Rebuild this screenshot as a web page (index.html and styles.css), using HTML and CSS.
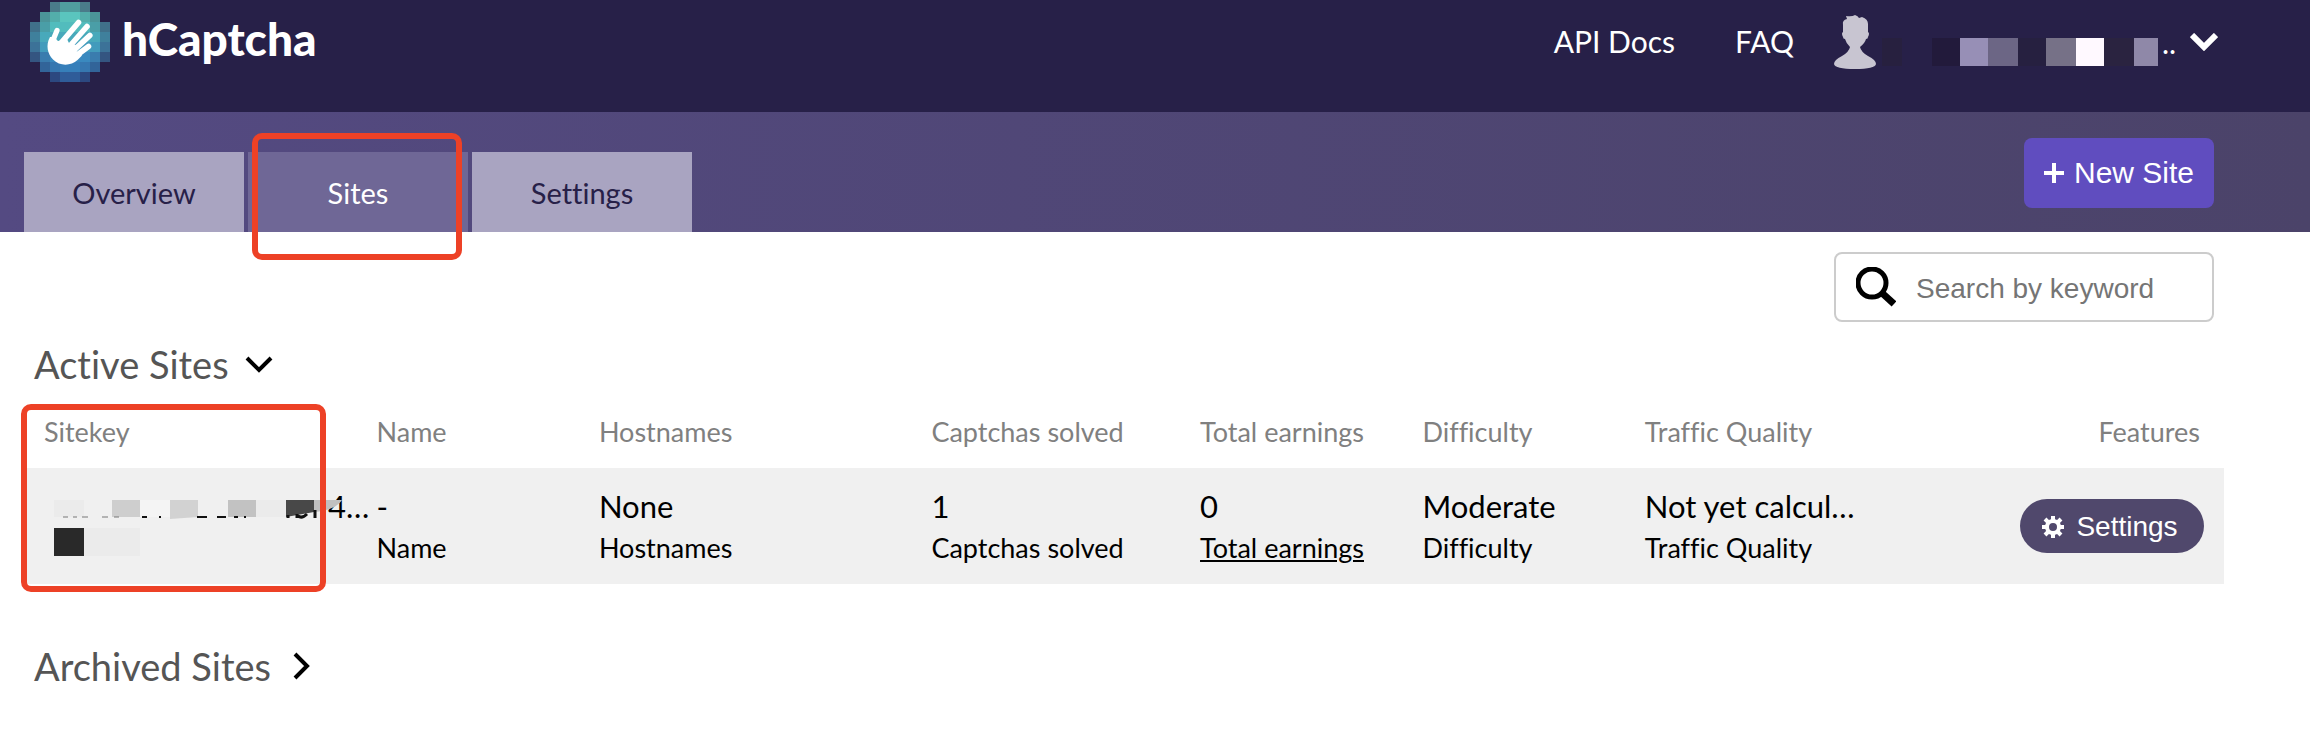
FILE: index.html
```
<!DOCTYPE html>
<html lang="en">
<head>
    <meta charset="UTF-8">
    <meta name="viewport" content="width=device-width, initial-scale=1.0">
    <title>hCaptcha - Sites</title>
    <link rel="stylesheet" href="styles.css">
</head>
<body>

    <header class="topbar">
        <a class="brand" href="#home">
            <svg class="brand-mark" viewBox="0 0 8 8" shape-rendering="crispEdges" aria-hidden="true">
                <path fill="#4a7b8a" d="M2 0h4v1H2z"/>
                <path fill="#509e9e" d="M3 0h2v1H3z"/>
                <path fill="#4b9499" d="M1 1h6v1H1z"/>
                <path fill="#53aeab" d="M2 1h4v1H2z"/>
                <path fill="#5ac5be" d="M3 1h2v1H3z"/>
                <path fill="#40708a" d="M0 2h8v1H0z"/>
                <path fill="#4a9ea7" d="M1 2h6v1H1z"/>
                <path fill="#52bcbd" d="M2 2h4v1H2z"/>
                <path fill="#3f809c" d="M0 3h8v1H0z"/>
                <path fill="#48a9bb" d="M1 3h6v1H1z"/>
                <path fill="#3c7298" d="M0 4h8v1H0z"/>
                <path fill="#429bbc" d="M1 4h6v1H1z"/>
                <path fill="#345581" d="M0 5h8v1H0z"/>
                <path fill="#3a7cae" d="M1 5h6v1H1z"/>
                <path fill="#3a89bf" d="M2 5h4v1H2z"/>
                <path fill="#326499" d="M1 6h6v1H1z"/>
                <path fill="#3677b0" d="M2 6h4v1H2z"/>
                <path fill="#367fba" d="M3 6h2v1H3z"/>
                <path fill="#2c4880" d="M2 7h4v1H2z"/>
                <path fill="#2f5c99" d="M3 7h2v1H3z"/>
                <g shape-rendering="geometricPrecision" stroke="#fff" stroke-linecap="round" fill="none">
                    <path stroke-width=".52" d="M2.7 2.85 2.1 4.3"/>
                    <path stroke-width=".56" d="M4.85 2.05 3.1 4.1M5.7 2.45 3.9 4.5M5.98 3.35 4.2 5M5.85 4.45 4.3 5.6"/>
                    <path fill="#fff" stroke="none" d="M2 3.5C1.55 4.3 1.75 5.2 2.3 5.75 3 6.45 4.1 6.4 4.75 5.8L5.2 5.35 4.5 4.8 4.6 4.3 3.9 4.1 3.6 3.5 3.2 3.7Q2.75 4.2 2.55 3.5Z"/>
                </g>
            </svg>
            <span>hCaptcha</span>
        </a>
        <div class="topbar-links">
            <a href="#docs">API Docs</a>
            <a href="#faq">FAQ</a>
            <button class="account" type="button" aria-label="Account menu">
                <svg class="avatar" viewBox="0 0 42 54" aria-hidden="true">
                    <path fill="#c8c5d1" d="M9 10Q8 5 13 4L12 1Q18 2 21 0 24 1 25 3L28 2Q34 4 34 9V17Q36 18 34 22 34 24 32 24 31 28 26 32 27 37 34 41 42 45 42 49 41 54 21 54 1 54 0 49 0 45 8 41 15 37 16 32 12 28 11 24 9 24 9 22 7 18 9 17Z"/>
                </svg>
                <svg class="account-name" viewBox="0 0 276 28" shape-rendering="crispEdges" aria-hidden="true">
                    <path fill="#27203f" d="M0 0h20v28H0z"/>
                    <path fill="#221a3b" d="M50 0h28v28H50z"/>
                    <path fill="#978fb6" d="M78 0h28v28H78z"/>
                    <path fill="#6c6685" d="M106 0h30v28h-30z"/>
                    <path fill="#262040" d="M136 0h28v28h-28z"/>
                    <path fill="#767187" d="M164 0h30v28h-30z"/>
                    <path fill="#fff9ff" d="M194 0h28v28h-28z"/>
                    <path fill="#2a2340" d="M222 0h30v28h-30z"/>
                    <path fill="#8f88a8" d="M252 0h24v28h-24z"/>
                </svg>
                <span class="account-dots">..</span>
                <svg class="account-arrow" viewBox="0 0 28 18" aria-hidden="true">
                    <path fill="none" stroke="#fff" stroke-width="6" d="M2 2l12 12L26 2"/>
                </svg>
            </button>
        </div>
    </header>

    <nav class="subnav">
        <ul class="tabs">
            <li><a class="tab" href="#overview">Overview</a></li>
            <li class="marked-tab"><a class="tab active" href="#sites">Sites</a></li>
            <li><a class="tab" href="#settings">Settings</a></li>
        </ul>
        <button class="new-site" type="button">
            <svg viewBox="0 0 20 20" aria-hidden="true"><path fill="#fff" d="M8 0h4v8h8v4h-8v8H8v-8H0V8h8z"/></svg>
            New Site
        </button>
    </nav>

    <main>
        <div class="toolbar">
            <label class="search">
                <svg viewBox="0 0 40 40" aria-hidden="true">
                    <circle cx="16" cy="16" r="14" fill="none" stroke="#000" stroke-width="5"/>
                    <path stroke="#000" stroke-width="7" d="M26 26l12 11"/>
                </svg>
                <input type="search" placeholder="Search by keyword" aria-label="Search by keyword">
            </label>
        </div>

        <h2>
            <button class="toggle" type="button" aria-expanded="true">
                Active Sites
                <svg viewBox="0 0 28 28" aria-hidden="true"><path fill="none" stroke="#000" stroke-width="4" d="M2 8l12 12L26 8"/></svg>
            </button>
        </h2>

        <div class="sites">
            <table>
                <colgroup>
                    <col class="col-key">
                    <col class="col-name">
                    <col class="col-hosts">
                    <col class="col-solved">
                    <col class="col-small">
                    <col class="col-small">
                    <col>
                </colgroup>
                <thead>
                    <tr>
                        <th>Sitekey</th>
                        <th>Name</th>
                        <th>Hostnames</th>
                        <th>Captchas solved</th>
                        <th>Total earnings</th>
                        <th>Difficulty</th>
                        <th>
                            <div class="last-cell">Traffic Quality <span>Features</span></div>
                        </th>
                    </tr>
                </thead>
                <tbody>
                    <tr>
                        <td class="key">
                            <div class="value">4…</div>
                            <svg class="key-mask" viewBox="0 0 292 60" aria-hidden="true">
                                <path fill="#ebebeb" d="M0 2h30v17H0zM30 30h56v28H30z"/>
                                <path fill="#cecece" d="M58 2h28v17H58z"/>
                                <path fill="#f4f4f4" d="M86 2h30v17H86z"/>
                                <path fill="#d2d2d2" d="M116 2h28v17l-28 2z"/>
                                <path fill="#c2c2c2" d="M174 2h28v17h-28z"/>
                                <path fill="#ebebeb" d="M202 2h30v17h-30z"/>
                                <path fill="#484848" d="M232 2h28v12l-28 5z"/>
                                <path fill="#c0c0c0" d="M260 2h28q-6 10-28 12z"/>
                                <path fill="#292929" d="M0 30h30v28H0z"/>
                                <path fill="none" stroke="#777" stroke-width="1" d="M9 19h5m5 0h4m5 0h6m14 0h6m6 0h5"/>
                                <path fill="none" stroke="#111" stroke-width="2" d="M88 19h5m12 0h2m36 0h10m10 0h9m8 0h4m6 0h2"/>
                                <path fill="none" stroke="#111" stroke-width="3" d="M234 17v3m9-4v4m1-2q4 3 9-2m8-4v8"/>
                            </svg>
                        </td>
                        <td>
                            <div class="value">-</div>
                            <div class="label">Name</div>
                        </td>
                        <td>
                            <div class="value">None</div>
                            <div class="label">Hostnames</div>
                        </td>
                        <td>
                            <div class="value">1</div>
                            <div class="label">Captchas solved</div>
                        </td>
                        <td>
                            <div class="value">0</div>
                            <a class="label" href="#earnings">Total earnings</a>
                        </td>
                        <td>
                            <div class="value">Moderate</div>
                            <div class="label">Difficulty</div>
                        </td>
                        <td>
                            <div class="last-cell">
                                <div>
                                    <div class="value">Not yet calcul…</div>
                                    <div class="label">Traffic Quality</div>
                                </div>
                                <button class="site-settings" type="button">
                                    <svg viewBox="0 0 22 22" aria-hidden="true">
                                        <circle cx="11" cy="11" r="6" fill="none" stroke="#fff" stroke-width="4"/>
                                        <path stroke="#fff" stroke-width="4" d="M11 0v4M11 18v4M0 11h4M18 11h4M3 3l3 3M16 16l3 3M3 19l3-3M16 6l3-3"/>
                                    </svg>
                                    Settings
                                </button>
                            </div>
                        </td>
                    </tr>
                </tbody>
            </table>
        </div>

        <h2>
            <button class="toggle" type="button" aria-expanded="false">
                Archived Sites
                <svg viewBox="0 0 28 28" aria-hidden="true"><path fill="none" stroke="#000" stroke-width="4" d="M8 2l12 12L8 26"/></svg>
            </button>
        </h2>
    </main>

</body>
</html>
```
FILE: styles.css
```
* {
    box-sizing: border-box;
}

body {
    margin: 0;
    font-family: Lato, sans-serif;
    font-variant-ligatures: none;
    background-color: #fff;
    color: #000;
}

button {
    border: 0;
    background: none;
    cursor: pointer;
}

svg {
    display: block;
    flex: none;
}

/* Top bar */
.topbar {
    display: flex;
    justify-content: space-between;
    align-items: flex-start;
    height: 112px;
    padding: 2px 92px 0 30px;
    background-color: #272048;
}

.brand {
    display: flex;
    align-items: center;
    gap: 12px;
    height: 80px;
    color: #fff;
    font-size: 46px;
    font-weight: 900;
    text-decoration: none;
}

.brand span {
    padding-bottom: 8px;
}

.brand-mark {
    width: 80px;
    height: 80px;
}

.topbar-links {
    display: flex;
    align-items: center;
    height: 80px;
    font-size: 30px;
}

.topbar-links a {
    margin-right: 60px;
    padding-bottom: 2px;
    color: #fff;
    text-decoration: none;
}

.topbar-links .account {
    margin-left: -20px;
}

.account {
    display: flex;
    align-items: center;
    padding: 0;
    color: #fff;
    font: inherit;
}

.avatar {
    width: 42px;
    height: 54px;
}

.account-name {
    width: 276px;
    height: 28px;
    margin: 20px 4px 0 6px;
}

.account-dots {
    width: 28px;
    text-align: left;
}

.account-arrow {
    width: 28px;
    height: 18px;
}

/* Tabs */
.subnav {
    display: flex;
    justify-content: space-between;
    align-items: flex-end;
    height: 120px;
    padding: 0 96px 0 24px;
    background: linear-gradient(to right, #544a82, #4b4369);
}

.tabs {
    display: flex;
    gap: 4px;
    margin: 0;
    padding: 0;
    list-style: none;
}

.tab {
    display: flex;
    justify-content: center;
    align-items: center;
    width: 220px;
    height: 80px;
    background-color: #a9a4c1;
    color: #272048;
    font-size: 29px;
    text-decoration: none;
}

.tab.active {
    background-color: #6f6796;
    color: #fff;
}

.marked-tab {
    position: relative;
}

.marked-tab::after {
    content: "";
    position: absolute;
    top: -19px;
    right: 6px;
    bottom: -28px;
    left: 4px;
    border: 6px solid #ed4126;
    border-radius: 10px;
}

.new-site {
    display: flex;
    justify-content: center;
    align-items: center;
    gap: 10px;
    width: 190px;
    height: 70px;
    margin-bottom: 24px;
    padding: 0;
    border-radius: 8px;
    background-color: #604dbf;
    color: #fff;
    font: 30px "Liberation Sans", Arial, sans-serif;
}

.new-site svg {
    width: 20px;
    height: 20px;
}

/* Content */
main {
    padding: 20px 86px 40px 22px;
}

.toolbar {
    display: flex;
    justify-content: flex-end;
    padding-right: 10px;
}

.search {
    display: flex;
    align-items: center;
    gap: 20px;
    width: 380px;
    height: 70px;
    padding: 0 20px;
    border: 2px solid #ccc;
    border-radius: 8px;
}

.search svg {
    width: 40px;
    height: 40px;
}

.search input {
    flex: 1;
    min-width: 0;
    padding: 4px 0 0;
    border: 0;
    outline: 0;
    background: none;
    font: 28px "Liberation Sans", Arial, sans-serif;
}

.search input::placeholder {
    color: #757575;
}

h2 {
    margin: 20px 0 0 12px;
}

.toggle {
    display: flex;
    align-items: center;
    gap: 16px;
    height: 48px;
    padding: 0 0 4px;
    color: #555;
    font: 38px Lato, sans-serif;
    font-variant-ligatures: none;
}

.toggle svg {
    width: 28px;
    height: 28px;
}

/* Sites table */
.sites {
    position: relative;
    margin: 14px 0 60px;
}

.sites::after {
    content: "";
    position: absolute;
    top: 0;
    bottom: -8px;
    left: -1px;
    box-sizing: border-box;
    width: 305px;
    border: 6px solid #ed4126;
    border-radius: 10px;
    pointer-events: none;
}

table {
    width: 100%;
    border-collapse: collapse;
    table-layout: fixed;
}

.col-key,
.col-hosts {
    width: 15.1%;
}

.col-name,
.col-small {
    width: 10.1%;
}

.col-solved {
    width: 12.2%;
}

th,
td {
    padding: 0 0 0 22px;
    text-align: left;
    white-space: nowrap;
}

th {
    height: 64px;
    padding-bottom: 10px;
    color: #808080;
    font-size: 27px;
    font-weight: normal;
}

td {
    height: 116px;
    background-color: #f0f0f0;
}

.last-cell {
    display: flex;
    justify-content: space-between;
    align-items: center;
    padding-right: 20px;
}

th .last-cell {
    padding-right: 24px;
}

.value {
    font-size: 31px;
    line-height: 44px;
}

.label {
    display: block;
    color: #000;
    font-size: 27px;
    line-height: 40px;
}

.key {
    position: relative;
    padding: 0 0 40px 306px;
}

.key-mask {
    position: absolute;
    top: 30px;
    left: 32px;
    width: 292px;
    height: 60px;
}

.site-settings {
    display: flex;
    justify-content: center;
    align-items: center;
    gap: 12px;
    width: 184px;
    height: 54px;
    padding: 2px 4px 0 0;
    border-radius: 27px;
    background-color: #50486c;
    color: #fff;
    font: 28px "Liberation Sans", Arial, sans-serif;
}

.site-settings svg {
    width: 22px;
    height: 22px;
}
```
